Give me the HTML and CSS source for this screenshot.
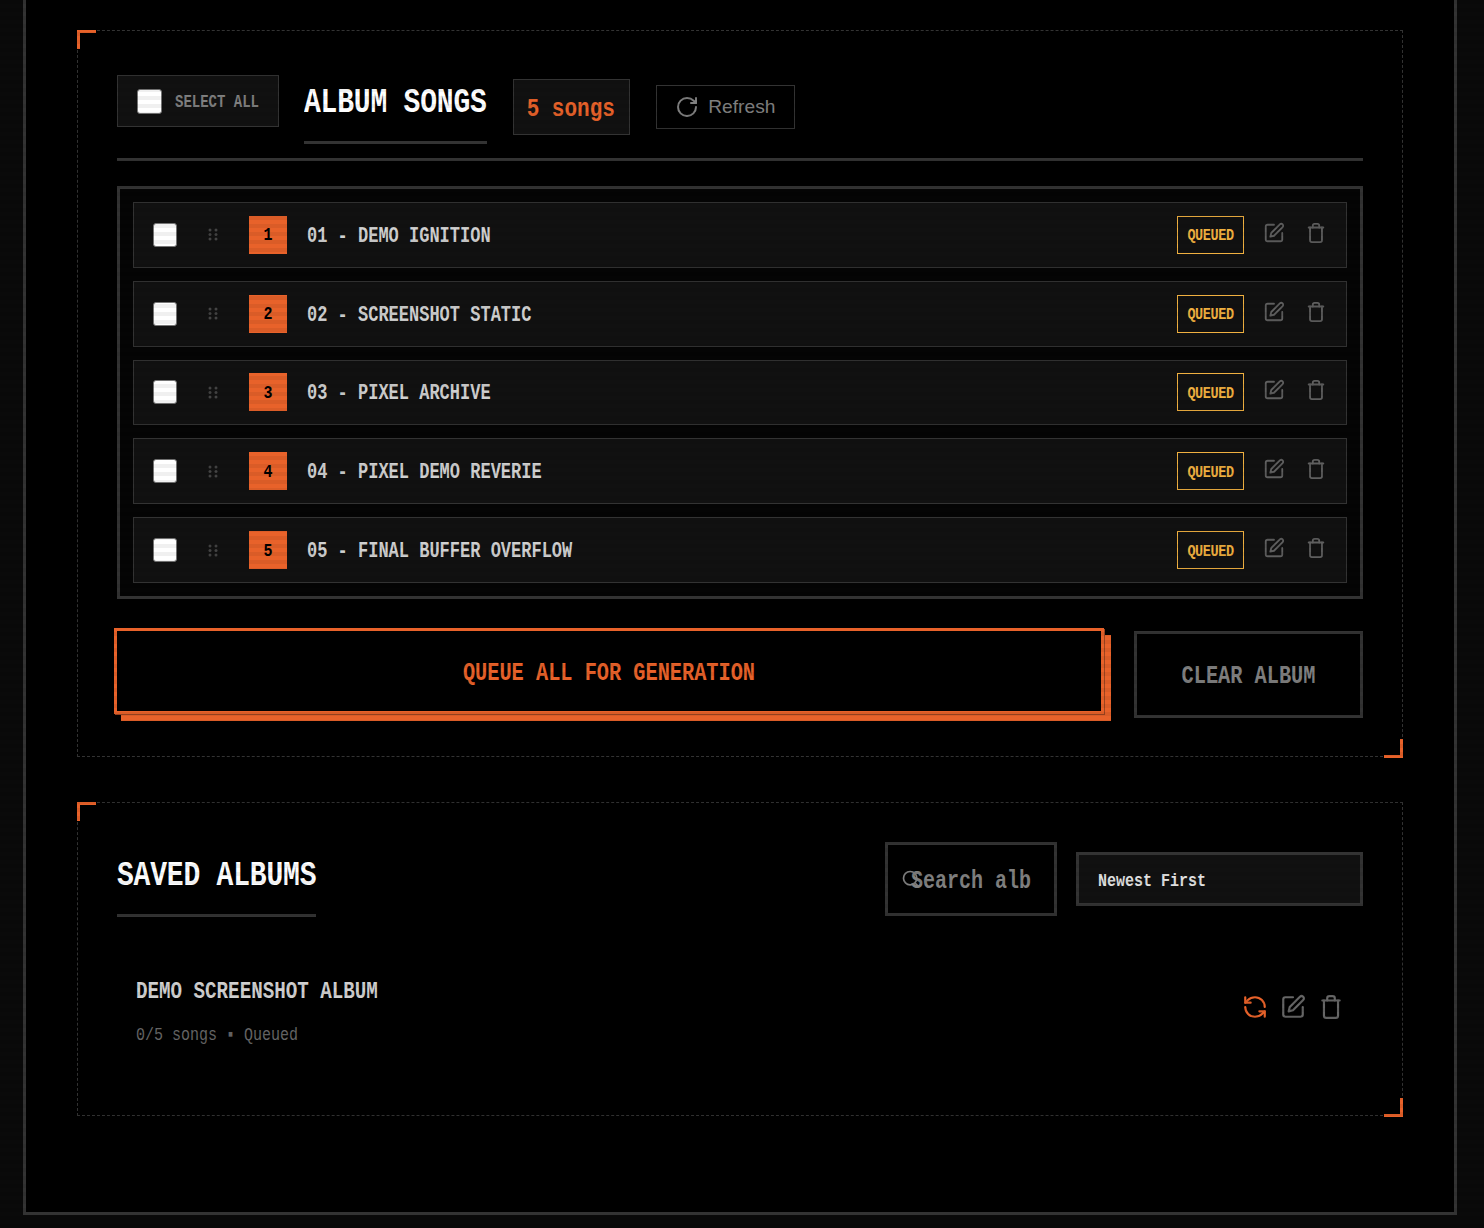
FILE: index.html
```html
<!DOCTYPE html>
<html lang="en">
  <head>
    <meta charset="UTF-8" />
    <meta name="viewport" content="width=device-width, initial-scale=1.0" />
    <title>Album Songs</title>
    <link rel="stylesheet" href="styles.css">
  </head>
  <body>
    <div class="frame">
      <section class="panel panel-songs">
        <header class="songs-header">
          <label class="select-all">
            <span class="check check-lg"></span>
            <span class="tall select-all-text">SELECT ALL</span>
          </label>
          <h2 class="heading"><span class="tall">ALBUM SONGS</span></h2>
          <span class="count"><span class="tall">5 songs</span></span>
          <button class="refresh">
            <svg class="refresh-icon" viewBox="0 0 24 24"><path d="M21 12a9 9 0 1 1-9-9c2.52 0 4.93 1 6.74 2.74L21 8" /><path d="M21 3v5h-5" /></svg>
            Refresh
          </button>
        </header>

        <div class="song-list">
          <div class="song">
            <span class="check"></span>
            <svg class="grip" viewBox="0 0 11 13"><circle cx="2" cy="2" r="1.5" /><circle cx="8" cy="2" r="1.5" /><circle cx="2" cy="6.5" r="1.5" /><circle cx="8" cy="6.5" r="1.5" /><circle cx="2" cy="11" r="1.5" /><circle cx="8" cy="11" r="1.5" /></svg>
            <span class="num"><span class="tall">1</span></span>
            <span class="song-title"><span class="tall">01 - DEMO IGNITION</span></span>
            <span class="status"><span class="tall">QUEUED</span></span>
            <svg class="icon" viewBox="0 0 24 24"><path d="M12 3H5a2 2 0 0 0-2 2v14a2 2 0 0 0 2 2h14a2 2 0 0 0 2-2v-7" /><path d="M18.4 2.6a2.1 2.1 0 1 1 3 3L12 15l-4 1 1-4z" /></svg>
            <svg class="icon icon-trash" viewBox="0 0 24 24"><path d="M4 6h16" /><path d="M18.5 6v14a2 2 0 0 1-2 2h-9a2 2 0 0 1-2-2V6" /><path d="M8.5 6V4a2 2 0 0 1 2-2h3a2 2 0 0 1 2 2v2" /></svg>
          </div>
          <div class="song">
            <span class="check"></span>
            <svg class="grip" viewBox="0 0 11 13"><circle cx="2" cy="2" r="1.5" /><circle cx="8" cy="2" r="1.5" /><circle cx="2" cy="6.5" r="1.5" /><circle cx="8" cy="6.5" r="1.5" /><circle cx="2" cy="11" r="1.5" /><circle cx="8" cy="11" r="1.5" /></svg>
            <span class="num"><span class="tall">2</span></span>
            <span class="song-title"><span class="tall">02 - SCREENSHOT STATIC</span></span>
            <span class="status"><span class="tall">QUEUED</span></span>
            <svg class="icon" viewBox="0 0 24 24"><path d="M12 3H5a2 2 0 0 0-2 2v14a2 2 0 0 0 2 2h14a2 2 0 0 0 2-2v-7" /><path d="M18.4 2.6a2.1 2.1 0 1 1 3 3L12 15l-4 1 1-4z" /></svg>
            <svg class="icon icon-trash" viewBox="0 0 24 24"><path d="M4 6h16" /><path d="M18.5 6v14a2 2 0 0 1-2 2h-9a2 2 0 0 1-2-2V6" /><path d="M8.5 6V4a2 2 0 0 1 2-2h3a2 2 0 0 1 2 2v2" /></svg>
          </div>
          <div class="song">
            <span class="check"></span>
            <svg class="grip" viewBox="0 0 11 13"><circle cx="2" cy="2" r="1.5" /><circle cx="8" cy="2" r="1.5" /><circle cx="2" cy="6.5" r="1.5" /><circle cx="8" cy="6.5" r="1.5" /><circle cx="2" cy="11" r="1.5" /><circle cx="8" cy="11" r="1.5" /></svg>
            <span class="num"><span class="tall">3</span></span>
            <span class="song-title"><span class="tall">03 - PIXEL ARCHIVE</span></span>
            <span class="status"><span class="tall">QUEUED</span></span>
            <svg class="icon" viewBox="0 0 24 24"><path d="M12 3H5a2 2 0 0 0-2 2v14a2 2 0 0 0 2 2h14a2 2 0 0 0 2-2v-7" /><path d="M18.4 2.6a2.1 2.1 0 1 1 3 3L12 15l-4 1 1-4z" /></svg>
            <svg class="icon icon-trash" viewBox="0 0 24 24"><path d="M4 6h16" /><path d="M18.5 6v14a2 2 0 0 1-2 2h-9a2 2 0 0 1-2-2V6" /><path d="M8.5 6V4a2 2 0 0 1 2-2h3a2 2 0 0 1 2 2v2" /></svg>
          </div>
          <div class="song">
            <span class="check"></span>
            <svg class="grip" viewBox="0 0 11 13"><circle cx="2" cy="2" r="1.5" /><circle cx="8" cy="2" r="1.5" /><circle cx="2" cy="6.5" r="1.5" /><circle cx="8" cy="6.5" r="1.5" /><circle cx="2" cy="11" r="1.5" /><circle cx="8" cy="11" r="1.5" /></svg>
            <span class="num"><span class="tall">4</span></span>
            <span class="song-title"><span class="tall">04 - PIXEL DEMO REVERIE</span></span>
            <span class="status"><span class="tall">QUEUED</span></span>
            <svg class="icon" viewBox="0 0 24 24"><path d="M12 3H5a2 2 0 0 0-2 2v14a2 2 0 0 0 2 2h14a2 2 0 0 0 2-2v-7" /><path d="M18.4 2.6a2.1 2.1 0 1 1 3 3L12 15l-4 1 1-4z" /></svg>
            <svg class="icon icon-trash" viewBox="0 0 24 24"><path d="M4 6h16" /><path d="M18.5 6v14a2 2 0 0 1-2 2h-9a2 2 0 0 1-2-2V6" /><path d="M8.5 6V4a2 2 0 0 1 2-2h3a2 2 0 0 1 2 2v2" /></svg>
          </div>
          <div class="song">
            <span class="check"></span>
            <svg class="grip" viewBox="0 0 11 13"><circle cx="2" cy="2" r="1.5" /><circle cx="8" cy="2" r="1.5" /><circle cx="2" cy="6.5" r="1.5" /><circle cx="8" cy="6.5" r="1.5" /><circle cx="2" cy="11" r="1.5" /><circle cx="8" cy="11" r="1.5" /></svg>
            <span class="num"><span class="tall">5</span></span>
            <span class="song-title"><span class="tall">05 - FINAL BUFFER OVERFLOW</span></span>
            <span class="status"><span class="tall">QUEUED</span></span>
            <svg class="icon" viewBox="0 0 24 24"><path d="M12 3H5a2 2 0 0 0-2 2v14a2 2 0 0 0 2 2h14a2 2 0 0 0 2-2v-7" /><path d="M18.4 2.6a2.1 2.1 0 1 1 3 3L12 15l-4 1 1-4z" /></svg>
            <svg class="icon icon-trash" viewBox="0 0 24 24"><path d="M4 6h16" /><path d="M18.5 6v14a2 2 0 0 1-2 2h-9a2 2 0 0 1-2-2V6" /><path d="M8.5 6V4a2 2 0 0 1 2-2h3a2 2 0 0 1 2 2v2" /></svg>
          </div>
        </div>

        <div class="actions">
          <button class="btn-queue"><span class="tall">QUEUE ALL FOR GENERATION</span></button>
          <button class="btn-clear"><span class="tall">CLEAR ALBUM</span></button>
        </div>
      </section>

      <section class="panel panel-saved">
        <header class="saved-header">
          <h2 class="heading"><span class="tall">SAVED ALBUMS</span></h2>
          <div class="search">
            <svg class="search-icon" viewBox="0 0 24 24"><circle cx="11" cy="11" r="8" /><path d="m21 21-4.3-4.3" /></svg>
            <span class="tall search-text">Search alb</span>
          </div>
          <div class="sort"><span class="tall">Newest First</span></div>
        </header>
        <div class="album">
          <div class="album-info">
            <div class="album-name"><span class="tall">DEMO SCREENSHOT ALBUM</span></div>
            <div class="album-meta"><span class="tall">0/5 songs &#9642; Queued</span></div>
          </div>
          <div class="album-actions">
            <svg class="album-icon icon-sync" viewBox="0 0 24 24"><path d="M21 12a9 9 0 0 0-9-9 9.75 9.75 0 0 0-6.74 2.74L3 8" /><path d="M3 3v5h5" /><path d="M3 12a9 9 0 0 0 9 9 9.75 9.75 0 0 0 6.74-2.74L21 16" /><path d="M16 16h5v5" /></svg>
            <svg class="album-icon" viewBox="0 0 24 24"><path d="M12 3H5a2 2 0 0 0-2 2v14a2 2 0 0 0 2 2h14a2 2 0 0 0 2-2v-7" /><path d="M18.4 2.6a2.1 2.1 0 1 1 3 3L12 15l-4 1 1-4z" /></svg>
            <svg class="album-icon" viewBox="0 0 24 24"><path d="M4 6h16" /><path d="M18.5 6v14a2 2 0 0 1-2 2h-9a2 2 0 0 1-2-2V6" /><path d="M8.5 6V4a2 2 0 0 1 2-2h3a2 2 0 0 1 2 2v2" /></svg>
          </div>
        </div>
      </section>
    </div>
    <div class="scanlines"></div>
  </body>
</html>
```

FILE: styles.css
```css
html,
body {
  height: 1228px;
  overflow: hidden;
}

body {
  font-family: "Liberation Mono", monospace;
  color: #e0e0e0;
  background-color: #0a0a0a;
  margin: 0;
  padding: 0;
}

/* mono font is too squat, stretch it to look like the pixel face */
.tall {
  display: inline-block;
  transform: scaleY(1.25);
}

.scanlines {
  position: fixed;
  inset: 0;
  pointer-events: none;
  background: repeating-linear-gradient(
    0deg,
    rgba(0, 0, 0, 0.06) 0,
    rgba(0, 0, 0, 0.06) 4px,
    transparent 4px,
    transparent 8px
  );
}

.frame {
  width: 1434px;
  height: 1215px;
  box-sizing: border-box;
  margin: 0 0 0 23px;
  padding: 30px 51px 0;
  background-color: #000;
  border: 3px solid #333;
  border-top: none;
}

.panel {
  position: relative;
  box-sizing: border-box;
  border: 1px dashed #333;
  padding: 0 39px;
}

.panel::before,
.panel::after {
  content: "";
  position: absolute;
  width: 16px;
  height: 16px;
  border: 3px solid #e8622a;
}

.panel::before {
  top: -1px;
  left: -1px;
  border-right: none;
  border-bottom: none;
}

.panel::after {
  right: -1px;
  bottom: -2px;
  border-left: none;
  border-top: none;
}

.panel-songs {
  height: 727px;
  padding-top: 44px;
}

.panel-saved {
  height: 314px;
  margin-top: 45px;
  padding-top: 39px;
}

.songs-header {
  display: flex;
  align-items: flex-start;
  height: 83px;
  border-bottom: 3px solid #333;
  box-sizing: content-box;
}

.select-all {
  display: flex;
  align-items: center;
  gap: 13px;
  box-sizing: border-box;
  width: 162px;
  height: 52px;
  padding-left: 19px;
  background-color: #111;
  border: 1px solid #333;
}

.select-all-text {
  margin-top: 1px;
  font-size: 14px;
  font-weight: 700;
  color: #808080;
}

.check {
  flex: none;
  display: block;
  box-sizing: border-box;
  width: 24px;
  height: 24px;
  background-color: #fff;
  border: 1px solid #767676;
  border-radius: 3px;
}

.check-lg {
  width: 25px;
  height: 25px;
}

.heading {
  margin: 0;
  font-size: 28px;
  line-height: 56px;
  font-weight: 700;
  color: #fff;
  letter-spacing: -0.2px;
  border-bottom: 3px solid #333;
}

.songs-header .heading {
  height: 66px;
  margin-left: 25px;
}

.count {
  box-sizing: border-box;
  height: 56px;
  margin: 4px 0 0 26px;
  padding: 0 14px 0 13px;
  font-size: 21px;
  line-height: 60px;
  font-weight: 700;
  color: #e8622a;
  background-color: #111;
  border: 1px solid #333;
}

.refresh {
  display: flex;
  align-items: center;
  justify-content: center;
  gap: 9px;
  box-sizing: border-box;
  width: 139px;
  height: 44px;
  margin: 10px 0 0 26px;
  padding: 0;
  font-family: "Liberation Sans", sans-serif;
  font-size: 19.2px;
  color: #808080;
  background: none;
  border: 1px solid #333;
}

.refresh-icon {
  width: 24px;
  height: 24px;
  fill: none;
  stroke: #808080;
  stroke-width: 2;
  stroke-linecap: round;
  stroke-linejoin: round;
}

.song-list {
  display: flex;
  flex-direction: column;
  gap: 13px;
  box-sizing: border-box;
  height: 413px;
  margin-top: 25px;
  padding: 13px;
  background-color: #050505;
  border: 3px solid #333;
}

.song {
  display: flex;
  align-items: center;
  box-sizing: border-box;
  height: 66px;
  padding: 0 19px;
  background-color: #111;
  border: 1px solid #333;
}

.grip {
  flex: none;
  width: 11px;
  height: 13px;
  margin-left: 31px;
  fill: #444;
}

.num {
  flex: none;
  display: flex;
  align-items: center;
  justify-content: center;
  width: 38px;
  height: 38px;
  margin-left: 30px;
  padding-top: 2px;
  box-sizing: border-box;
  font-size: 15px;
  font-weight: 700;
  color: #000;
  background-color: #e8622a;
}

.song-title {
  flex: 1;
  margin-left: 20px;
  padding-top: 3px;
  font-size: 17px;
  font-weight: 700;
  color: #d0d0d0;
}

.status {
  flex: none;
  display: flex;
  align-items: center;
  justify-content: center;
  box-sizing: border-box;
  width: 67px;
  height: 38px;
  padding-top: 2px;
  font-size: 13.5px;
  font-weight: 700;
  letter-spacing: -0.4px;
  color: #f0b040;
  border: 1px solid #f0b040;
}

.icon {
  flex: none;
  width: 22px;
  height: 22px;
  margin: -4px 0 0 19px;
  fill: none;
  stroke: #5f5f5f;
  stroke-width: 2;
  stroke-linecap: round;
  stroke-linejoin: round;
}

.icon-trash {
  margin: -4px 0 0 20px;
}

.actions {
  display: flex;
  align-items: flex-start;
  justify-content: space-between;
  margin: 29px 0 0 -3px;
}

.btn-queue {
  box-sizing: border-box;
  width: 990px;
  height: 86px;
  padding: 4px 0 0;
  font-family: inherit;
  font-size: 20.3px;
  font-weight: 700;
  color: #e8622a;
  background-color: #000;
  border: 3px solid #e8622a;
  box-shadow: 1px 1px 0 #9c4520, 7px 7px 0 #e8622a;
}

.btn-clear {
  box-sizing: border-box;
  width: 229px;
  height: 87px;
  margin-top: 3px;
  padding: 4px 0 0;
  font-family: inherit;
  font-size: 20.3px;
  font-weight: 700;
  color: #808080;
  background: none;
  border: 3px solid #333;
}

.saved-header {
  display: flex;
  align-items: flex-start;
}

.saved-header .heading {
  height: 72px;
  font-size: 28px;
  line-height: 68px;
  margin-right: auto;
}

.search {
  position: relative;
  display: flex;
  align-items: center;
  box-sizing: border-box;
  width: 172px;
  height: 74px;
  padding: 4px 0 0 23px;
  border: 3px solid #333;
}

.search-icon {
  position: absolute;
  left: 13px;
  top: 24px;
  width: 20px;
  height: 20px;
  fill: none;
  stroke: #808080;
  stroke-width: 2;
}

.search-text {
  font-size: 20px;
  font-weight: 700;
  color: #808080;
}

.sort {
  display: flex;
  align-items: center;
  box-sizing: border-box;
  width: 287px;
  height: 54px;
  margin: 10px 0 0 19px;
  padding: 4px 0 0 19px;
  font-size: 15px;
  font-weight: 700;
  color: #e0e0e0;
  background-color: #111;
  border: 3px solid #333;
}

.album {
  display: flex;
  justify-content: space-between;
  padding: 0 19px;
  margin-top: 63px;
}

.album-name {
  font-size: 19.2px;
  line-height: 24px;
  font-weight: 700;
  color: #d0d0d0;
}

.album-meta {
  margin-top: 22px;
  font-size: 15px;
  line-height: 20px;
  color: #666;
}

.album-actions {
  display: flex;
  gap: 12px;
  margin: 14px 0 0 0;
}

.album-icon {
  width: 26px;
  height: 26px;
  fill: none;
  stroke: #666;
  stroke-width: 2;
  stroke-linecap: round;
  stroke-linejoin: round;
}

.icon-sync {
  stroke: #e8622a;
}
```
